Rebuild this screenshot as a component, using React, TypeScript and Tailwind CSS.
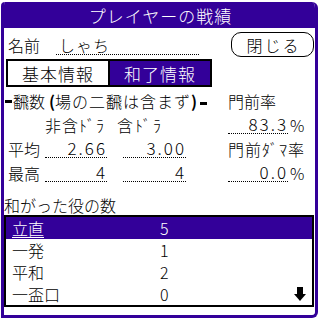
import React from 'react'

const purple = 'bg-[#330099]'

function Bar() {
  // bold short dash used in section headers
  return <span className="mx-[1px] inline-block h-[3px] w-[7px] bg-black align-middle" />
}

function Field({ value, className }: { value: string; className: string }) {
  return (
    <div
      className={`flex h-[18px] items-end justify-end border-b border-dotted border-black text-[17px] leading-[18px] tracking-[2px] ${className}`}
    >
      {value}
    </div>
  )
}

const yaku = [
  { name: '立直', count: '5' },
  { name: '一発', count: '1' },
  { name: '平和', count: '2' },
  { name: '一盃口', count: '0' },
]

export default function App() {
  return (
    <div
      className="h-[320px] w-[320px] overflow-hidden bg-white text-[16px] font-light text-black"
      style={{ fontFamily: '"Noto Sans CJK JP", "Noto Sans", sans-serif' }}
    >
      <div className="ml-px mt-[2px] flex h-[316px] w-[317px] flex-col overflow-hidden rounded-tl-[4px] rounded-tr-[6px] rounded-br-[6px] border-x-[3px] border-b-[3px] border-[#330099]">
        {/* title */}
        <div
          className={`flex h-[26px] shrink-0 items-center justify-center ${purple} pl-[2px] text-[17px] leading-none tracking-[1px] text-white`}
        >
          プレイヤーの戦績
        </div>

        {/* name + close */}
        <div className="mt-[4px] flex h-[25px] items-center">
          <span className="ml-[4px] leading-none">名前</span>
          <div className="ml-[16px] flex h-[20px] w-[143px] items-end border-b border-dotted border-black pl-[3px] leading-[18px] tracking-[1px]">
            しゃち
          </div>
          <button className="ml-auto mr-[1px] flex h-[25px] w-[83px] items-center justify-center rounded-[10px] border border-black pl-[2px] leading-none tracking-[2px]">
            閉じる
          </button>
        </div>

        {/* tabs */}
        <div className="ml-[2px] mt-[2px] flex h-[28px] w-[206px] border-2 border-black">
          <div className="flex w-[100px] items-center justify-center bg-white text-[17px] leading-none tracking-[1px]">
            基本情報
          </div>
          <div
            className={`flex flex-1 items-center justify-center border-l-2 border-black ${purple} text-[17px] leading-none tracking-[1px] text-white`}
          >
            和了情報
          </div>
        </div>

        {/* stats */}
        <div className="mt-[2px] grid grid-cols-[224px_1fr] pr-[4px]">
          <div className="flex h-[24px] items-center leading-none">
            <Bar />
            <span>飜数</span>
            <span className="ml-[4px] font-bold">(</span>
            <span className="tracking-[1px]">場の二飜は含まず</span>
            <span className="font-bold">)</span>
            <span className="ml-[2px]">
              <Bar />
            </span>
          </div>
          <div className="flex h-[24px] items-center leading-none">門前率</div>

          <div className="flex h-[24px] items-center pl-[41px] leading-none">
            <span className="tracking-[1px]">非含ﾄﾞﾗ</span>
            <span className="ml-[12px] tracking-[2px]">含ﾄﾞﾗ</span>
          </div>
          <div className="flex h-[24px] items-center">
            <Field value="83.3" className="w-[60px]" />
            <span className="ml-[2px] leading-[18px]">%</span>
          </div>

          <div className="flex h-[24px] items-center pl-[4px]">
            <span className="w-[36px] leading-none">平均</span>
            <Field value="2.66" className="ml-[1px] w-[62px]" />
            <Field value="3.00" className="ml-[16px] w-[63px]" />
          </div>
          <div className="flex h-[24px] items-center leading-none tracking-[1px]">門前ﾀﾞﾏ率</div>

          <div className="flex h-[24px] items-center pl-[4px]">
            <span className="w-[36px] leading-none">最高</span>
            <Field value="4" className="ml-[1px] w-[62px]" />
            <Field value="4" className="ml-[16px] w-[63px]" />
          </div>
          <div className="flex h-[24px] items-center">
            <Field value="0.0" className="w-[60px]" />
            <span className="ml-[2px] leading-[18px]">%</span>
          </div>
        </div>

        <div className="mt-[10px] flex h-[20px] items-center leading-none">和がった役の数</div>

        {/* yaku list */}
        <div className="relative mr-px h-[92px] border-2 border-black">
          {yaku.map((y, i) => (
            <div
              key={y.name}
              className={`flex h-[22px] items-center leading-none ${
                i === 0 ? `${purple} text-white` : 'bg-white'
              }`}
            >
              <span className={`ml-[6px] w-[148px] ${i === 0 ? 'underline underline-offset-2' : ''}`}>
                {y.name}
              </span>
              <span>{y.count}</span>
            </div>
          ))}
          <svg
            className="absolute bottom-[4px] right-[6px]"
            width="12"
            height="14"
            viewBox="0 0 12 14"
          >
            <rect x="3" y="0" width="6" height="7" fill="black" />
            <path d="M0 7 H12 L6 14 Z" fill="black" />
          </svg>
        </div>
      </div>
    </div>
  )
}
